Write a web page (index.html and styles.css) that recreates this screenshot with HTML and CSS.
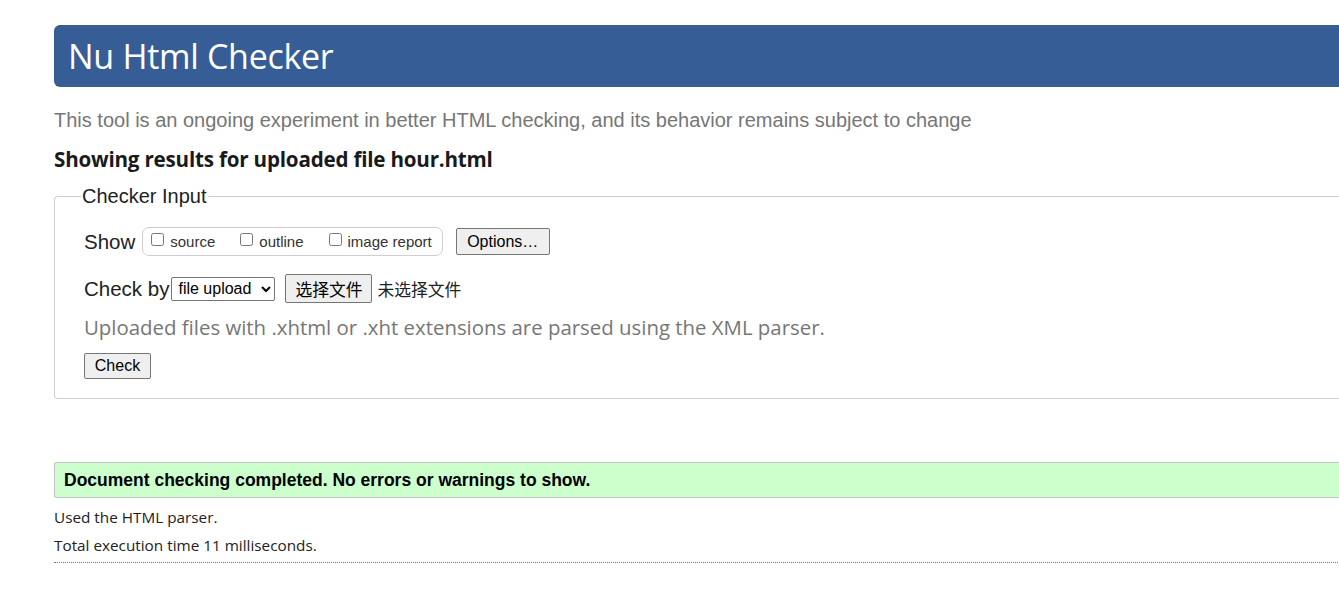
FILE: index.html
```html
<!DOCTYPE html>
<html lang="en">
<head>
<meta charset="utf-8">
<title>Nu Html Checker</title>
<link rel="stylesheet" href="styles.css">
</head>
<body>
<div class="page">
  <h1 class="title">Nu Html Checker</h1>
  <p class="intro">This tool is an ongoing experiment in better HTML checking, and its behavior remains subject to change</p>
  <h2 class="results">Showing results for uploaded file hour.html</h2>
  <fieldset class="input">
    <legend>Checker Input</legend>
    <div class="row show-row">
      <span class="label">Show</span>
      <span class="checks">
        <label class="chk"><input type="checkbox"> source</label>
        <label class="chk"><input type="checkbox"> outline</label>
        <label class="chk"><input type="checkbox"> image report</label>
      </span>
      <button class="btn options">Options…</button>
    </div>
    <div class="row by-row">
      <span class="label">Check by</span>
      <select class="sel"><option>file upload</option></select>
      <button class="btn file">选择文件</button>
      <span class="nofile">未选择文件</span>
    </div>
    <p class="note">Uploaded files with .xhtml or .xht extensions are parsed using the XML parser.</p>
    <button class="btn check">Check</button>
  </fieldset>
  <p class="success">Document checking completed. No errors or warnings to show.</p>
  <p class="stat">Used the HTML parser.</p>
  <p class="stat">Total execution time 11 milliseconds.</p>
  <hr class="dots">
</div>
</body>
</html>
```
FILE: styles.css
```css
html, body {
  margin: 0;
  padding: 0;
  background: #fff;
  overflow: hidden;
}
body {
  font-family: "Liberation Sans", Arial, sans-serif;
  color: #000;
}
.page {
  width: 1400px;
  padding: 25px 0 0 54px;
}
.title {
  margin: 0;
  height: 62px;
  box-sizing: border-box;
  background: #365d96;
  color: #fff;
  border-radius: 6px 0 0 6px;
  font-family: "Open Sans", "Noto Sans", sans-serif;
  font-weight: 400;
  font-size: 34px;
  line-height: 62px;
  padding-left: 14px;
  letter-spacing: -0.3px;
}
.intro {
  margin: 20px 0 0 0;
  font-size: 20px;
  line-height: 26px;
  color: #767676;
}
.results {
  margin: 13px 0 0 0;
  font-family: "Open Sans", "Noto Sans", sans-serif;
  font-weight: 700;
  font-size: 20.6px;
  line-height: 26px;
  color: #1a1a1a;
  letter-spacing: -0.2px;
}
.input {
  margin: 13px 0 0 0;
  border: 1px solid #cfcfcf;
  border-right: none;
  border-radius: 4px 0 0 4px;
  padding: 4px 0 19px 29px;
}
.input legend {
  font-size: 20px;
  color: #222;
  padding: 0 1px;
  margin-left: -3px;
}
.row {
  display: flex;
  align-items: center;
}
.label {
  font-size: 20.5px;
  color: #222;
}
.show-row {
  margin-top: 15px;
}
.checks {
  display: inline-flex;
  align-items: center;
  gap: 25px;
  margin-left: 7px;
  height: 27px;
  border: 1px solid #cfcfcf;
  border-radius: 7px;
  padding: 0 10px 0 8px;
  font-size: 15px;
  color: #333;
}
.chk {
  display: inline-flex;
  align-items: center;
}
.chk input {
  margin: 0 6px 0 0;
  width: 13px;
  height: 13px;
  position: relative;
  top: -2px;
}
.btn {
  font-family: "Liberation Sans", Arial, sans-serif;
  background: #efefef;
  border: 1px solid #767676;
  border-radius: 2px;
  color: #000;
  padding: 0 9px;
}
.options {
  margin-left: 13px;
  height: 27px;
  width: 94px;
  font-size: 16px;
  padding: 0;
}
.by-row {
  margin-top: 18px;
}
.sel {
  margin-left: 2px;
  height: 24px;
  width: 104px;
  font-family: "Liberation Sans", Arial, sans-serif;
  font-size: 16px;
  border: 1px solid #767676;
  border-radius: 2px;
  background: #fff;
  color: #000;
  padding: 0 0 0 2px;
}
.file {
  margin-left: 10px;
  height: 29px;
  width: 87px;
  font-size: 16.8px;
  font-family: "Noto Sans CJK SC", sans-serif;
  padding: 0;
}
.nofile {
  margin-left: 5px;
  font-family: "Noto Sans CJK SC", sans-serif;
  font-size: 16.8px;
  color: #222;
}
.note {
  margin: 11px 0 0 0;
  font-family: "Open Sans", "Noto Sans", sans-serif;
  font-size: 20.4px;
  line-height: 26px;
  color: #767676;
}
.check {
  margin-top: 13px;
  height: 26px;
  width: 67px;
  font-size: 16px;
  padding: 0;
}
.success {
  margin: 63px 0 0 0;
  height: 36px;
  box-sizing: border-box;
  background: #ccffcc;
  border: 1px solid #c3c3c3;
  border-right: none;
  border-radius: 3px 0 0 3px;
  padding-left: 9px;
  font-weight: 700;
  font-size: 17.5px;
  line-height: 34px;
  color: #000;
}
.stat {
  margin: 9px 0 0 0;
  font-family: "Open Sans", "Noto Sans", sans-serif;
  font-size: 15.3px;
  line-height: 20px;
  color: #222;
}
.stat + .stat {
  margin-top: 8px;
}
.dots {
  margin: 7px 0 0 0;
  border: none;
  border-top: 1px dotted #777;
  height: 0;
}
```
